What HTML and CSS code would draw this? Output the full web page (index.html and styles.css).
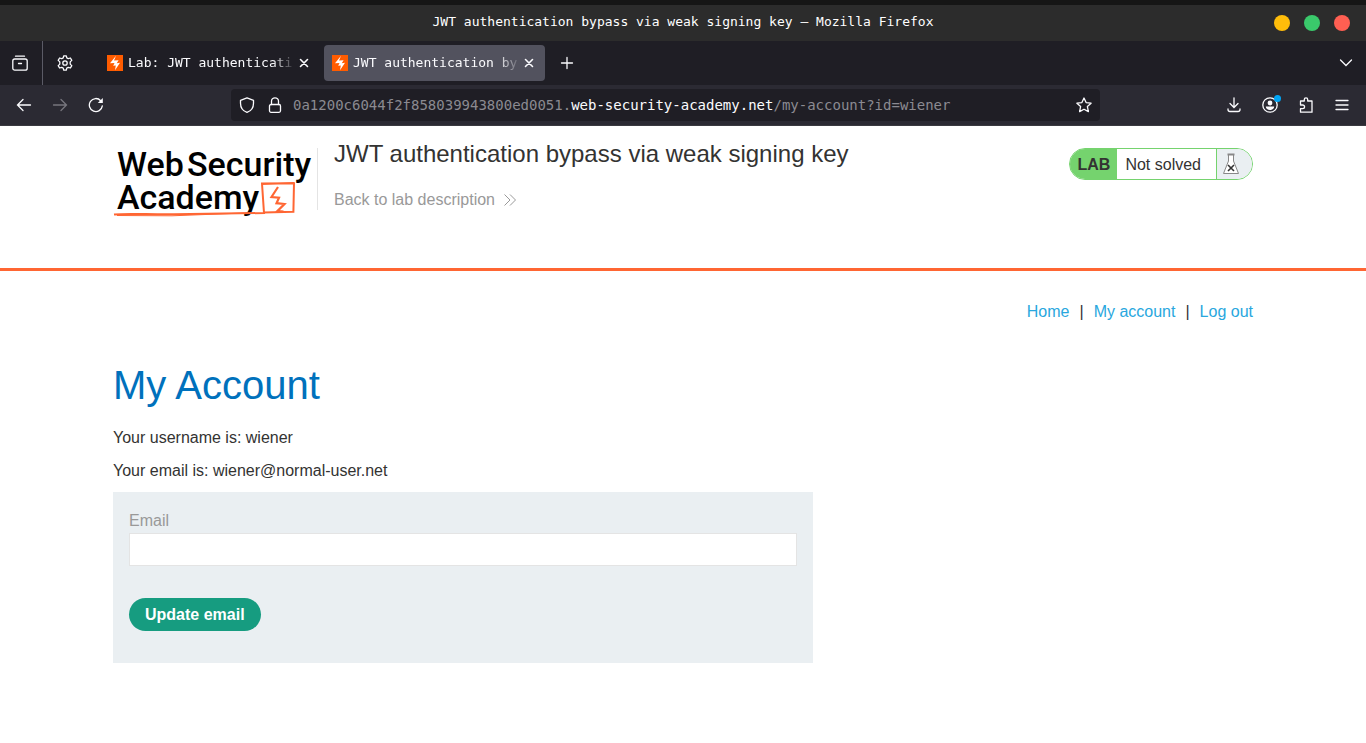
FILE: index.html
```html
<!DOCTYPE html>
<html lang="en">
<head>
<meta charset="utf-8">
<title>JWT authentication bypass via weak signing key</title>
<link rel="stylesheet" href="styles.css">
</head>
<body>
<svg class="defs" width="0" height="0" aria-hidden="true">
  <symbol id="bolt" viewBox="0 0 16 16"><path d="M0 0h16v16H0z" fill="#ff5c00"/><path d="M9 .8L7 5.600l4.600-.3L9.700 8.200l3.300-.4L8 15.200l.8-4.600-2.600.2 1.300-2.900-4.500.4z" fill="#fff"/></symbol>
  <symbol id="close" viewBox="0 0 16 16"><path d="M4.500 4.500l7 7M11.500 4.500l-7 7" fill="none" stroke="currentColor" stroke-width="1.600" stroke-linecap="round"/></symbol>
</svg>
<div class="desktop-bar"></div>
<div class="titlebar">
  <span class="window-title">JWT authentication bypass via weak signing key — Mozilla Firefox</span>
  <div class="window-buttons">
    <button class="dot yellow" aria-label="Minimize"></button>
    <button class="dot green" aria-label="Maximize"></button>
    <button class="dot red" aria-label="Close window"></button>
  </div>
</div>
<div class="tabs">
  <button class="tool view" aria-label="Recent browsing"><svg class="icon" viewBox="0 0 16 16"><path d="M3.500 1.200h9"/><rect x=".8" y="4" width="14.400" height="11.200" rx="2"/><path d="M6.500 8.500h3"/></svg></button>
  <button class="tool gear" aria-label="Settings"><svg class="icon" viewBox="0 0 16 16"><path d="M6.700.8h2.600l.5 2.100 1.500.8 2.100-.7 1.400 2.400-1.600 1.500v2.200l1.600 1.500-1.400 2.400-2.100-.7-1.500.8-.5 2.100H6.700l-.5-2.100-1.500-.8-2.100.7-1.400-2.400 1.600-1.500V6.900L1.200 5.400l1.400-2.400 2.100.7 1.500-.8z" stroke-linejoin="round"/><circle cx="8" cy="8" r="2.200"/></svg></button>
  <div class="tab">
    <svg class="icon"><use href="#bolt"/></svg><span class="tab-title">Lab: JWT authenticati</span>
    <button class="tab-close" aria-label="Close tab"><svg class="icon"><use href="#close"/></svg></button>
  </div>
  <div class="tab active">
    <svg class="icon"><use href="#bolt"/></svg><span class="tab-title">JWT authentication by</span>
    <button class="tab-close" aria-label="Close tab"><svg class="icon"><use href="#close"/></svg></button>
  </div>
  <button class="tool" aria-label="New tab"><svg class="icon" viewBox="0 0 16 16"><path d="M8 2.500v11M2.500 8h11"/></svg></button>
  <button class="tool last" aria-label="List all tabs"><svg class="icon" viewBox="0 0 16 16"><path d="M2.500 5l5.500 5.500L13.500 5"/></svg></button>
</div>
<div class="navbar">
  <div class="nav-buttons">
    <button class="bare" aria-label="Back"><svg class="icon" viewBox="0 0 16 16"><path d="M14.500 8H1.500M7 2.500L1.500 8 7 13.500"/></svg></button>
    <button class="bare dim" aria-label="Forward"><svg class="icon" viewBox="0 0 16 16"><path d="M1.500 8h13M9 2.500L14.500 8 9 13.500"/></svg></button>
    <button class="bare" aria-label="Reload"><svg class="icon" viewBox="0 0 16 16"><path d="M14.300 8.800A6.500 6.500 0 1 1 12.700 3.700"/><path d="M14.800 1v5H9.800z" fill="currentColor" stroke="none"/></svg></button>
  </div>
  <div class="urlbar">
    <svg class="icon" viewBox="0 0 16 16"><path d="M8 .8l6.500 2.500v3C14.500 10.500 12 14 8 15.400 4 14 1.500 10.500 1.500 6.300v-3z" stroke-linejoin="round"/></svg>
    <svg class="icon lock" viewBox="0 0 16 16"><rect x="2.500" y="7.500" width="11" height="7.800" rx="1.500"/><path d="M4.500 7.500V4.300a3.500 3.500 0 0 1 7 0v3.200"/></svg>
    <div class="url" role="textbox" aria-label="Address">0a1200c6044f2f858039943800ed0051.<span class="domain">web-security-academy.net</span>/my-account?id=wiener</div>
    <button class="bare" aria-label="Bookmark"><svg class="icon" viewBox="0 0 16 16"><path d="M8 1l2.100 4.600 5 .6-3.700 3.400 1 5L8 12.200l-4.400 2.400 1-5L.9 6.200l5-.6z" stroke-linejoin="round"/></svg></button>
  </div>
  <div class="nav-tools">
    <button class="bare" aria-label="Downloads"><svg class="icon" viewBox="0 0 16 16"><path d="M8 .8v9.700M4 6.500l4 4 4-4M2 12v.5a2 2 0 0 0 2 2h8a2 2 0 0 0 2-2V12"/></svg></button>
    <button class="bare account" aria-label="Account"><svg class="icon" viewBox="0 0 16 16"><circle cx="8" cy="8" r="7.200"/><circle cx="8" cy="6" r="2.400" fill="currentColor" stroke="none"/><path d="M3.800 9.500h8.400c0 2-1.900 3.600-4.200 3.600s-4.200-1.600-4.200-3.600z" fill="currentColor" stroke="none"/></svg></button>
    <button class="bare" aria-label="Extensions"><svg class="icon" viewBox="0 0 16 16"><path d="M2.500 7V4h3.800V2.500a1.700 1.700 0 0 1 3.400 0V4H14v11.200H2.500v-3.500h2.200a1.800 1.800 0 0 0 0-3.700H2.500z" stroke-linejoin="round"/></svg></button>
    <button class="bare" aria-label="Menu"><svg class="icon" viewBox="0 0 16 16"><path d="M2 3.500h12M2 8h12M2 12.500h12"/></svg></button>
  </div>
</div>

<header class="lab-header">
  <div class="container header-row">
    <a class="logo" href="#" aria-label="Web Security Academy">
      <svg width="204" height="78" viewBox="0 0 204 78">
        <g class="logo-text"><text x="4" y="36">Web</text><text x="74" y="36">Security</text><text x="4" y="69">Academy</text></g>
        <path d="M1 74.500c14-1.500 36 .2 60-.2l90-1.300-2-29.500 32-.3-.6 28.500-30 .8" fill="none" stroke="#ff6633" stroke-width="2"/>
        <path d="M4 75.500l55 .3 72-2.800M149 44.500l32-2" fill="none" stroke="#ff6633"/>
        <path d="M165 47l-6.500 10 7.500.6-2.500 5.600 8 .8-7 7 6 .6" fill="none" stroke="#ff6633" stroke-width="2.200"/>
      </svg>
    </a>
    <div class="lab-title">
      <h2>JWT authentication bypass via weak signing key</h2>
      <a class="back" href="#">Back to lab description <svg width="12" height="12" viewBox="0 0 12 12"><path d="M.5.5L6 6 .5 11.500M6 .5L11.500 6 6 11.500" fill="none" stroke="#999"/></svg></a>
    </div>
    <div class="status">
      <span class="tag">LAB</span><span class="state">Not solved</span>
      <span class="flask"><svg width="18" height="22" viewBox="0 0 18 22"><path d="M6.500 2v6L1.500 20.500h15L11.500 8V2" fill="#fff" stroke="#888"/><path d="M5.500 1.500h7" stroke="#888" stroke-width="2"/><path d="M6 12l6 6M12 12l-6 6" stroke="#333" stroke-width="1.600"/></svg></span>
    </div>
  </div>
</header>
<main class="container">
  <nav class="links"><a href="#">Home</a><span>|</span><a href="#">My account</a><span>|</span><a href="#">Log out</a></nav>
  <h1>My Account</h1>
  <div class="details">
    <p>Your username is: wiener</p>
    <p>Your email is: wiener@normal-user.net</p>
  </div>
  <form class="email-form">
    <label for="email">Email</label>
    <input id="email" type="email">
    <button type="button">Update email</button>
  </form>
</main>
</body>
</html>
```
FILE: styles.css
```css
* { box-sizing: border-box; }
body { margin: 0; background: #fff; color: #333332; font: 16px/20px "Liberation Sans", Arial, sans-serif; }
a { text-decoration: none; color: #29a7de; }
button { font: inherit; color: inherit; border: 0; padding: 0; background: none; }
.defs { position: absolute; }
.icon { display: block; flex: none; width: 16px; height: 16px; fill: none; stroke: currentColor; stroke-width: 1.3; stroke-linecap: round; }

.desktop-bar { height: 5px; background: #161616; }
.titlebar { position: relative; display: flex; align-items: center; justify-content: center; height: 36px; background: #2c2c2c; color: #fff; font: 13px/20px "DejaVu Sans Mono", monospace; padding-bottom: 2px; }
.window-buttons { position: absolute; right: 16px; top: 10px; display: flex; gap: 14px; }
.dot { width: 16px; height: 16px; border-radius: 50%; }
.yellow { background: #ffbd0a; }
.green { background: #3ac96b; }
.red { background: #ff5f52; }

.tabs { display: flex; align-items: center; height: 44px; background: #1f1e25; color: #fbfbfe; font: 13px/20px "DejaVu Sans Mono", monospace; }
.tool { display: flex; align-items: center; justify-content: center; width: 44px; height: 44px; }
.view { width: 43px; padding-right: 3px; border-right: 1px solid #5b5b66; }
.gear { margin-right: 12px; }
.last { margin-left: auto; width: 40px; }
.tab { display: flex; align-items: center; width: 221px; height: 36px; padding: 0 8px; border-radius: 4px; }
.tab + .tab { margin-left: 4px; }
.active { background: #52525e; }
.tab .icon { stroke: none; }
.tab-title { flex: 1; min-width: 0; margin-left: 5px; white-space: nowrap; -webkit-mask-image: linear-gradient(to left, transparent, #000 24px); mask-image: linear-gradient(to left, transparent, #000 24px); }

.navbar { display: flex; align-items: center; justify-content: space-between; height: 41px; padding: 0 16px; background: #2b2a33; border-bottom: 1px solid #3a3a40; color: #fbfbfe; }
.nav-buttons { display: flex; gap: 20px; width: 215px; }
.dim { color: #77767e; }
.urlbar { display: flex; align-items: center; flex: 1; height: 32px; padding: 0 8px; border-radius: 4px; background: #1f1e25; }
.lock { margin-left: 12px; }
.url { flex: 1; margin-left: 10px; color: #8b8a91; font: 14px/20px "DejaVu Sans Mono", monospace; white-space: nowrap; overflow: hidden; }
.domain { color: #fbfbfe; }
.nav-tools { display: flex; justify-content: flex-end; gap: 20px; width: 250px; }
.account { position: relative; }
.account::after { content: ""; position: absolute; top: -2px; right: -3px; width: 7px; height: 7px; border-radius: 50%; background: #00a5f5; }

.container { max-width: 1140px; margin: 0 auto; }
.lab-header { border-bottom: 3px solid #ff6633; padding: 14px 0 50px; }
.header-row { display: flex; align-items: flex-start; }
.logo svg { display: block; overflow: visible; }
.logo-text { font: 500 34px Roboto, sans-serif; fill: #000; }
.lab-title { flex: 1; height: 62px; margin-top: 8px; padding-left: 16px; border-left: 1px solid #e4e4e4; }
.lab-title h2 { margin: -10px 0 21px; font-size: 24px; line-height: 31px; font-weight: 400; }
.back { display: flex; align-items: center; gap: 9px; color: #999; }
.status { display: flex; height: 32px; margin-top: 8px; border: 1px solid #75d36e; border-radius: 16px; overflow: hidden; line-height: 32px; }
.tag { padding: 0 7px 0 8px; background: #75d36e; font-weight: 700; }
.state { padding: 0 15px 0 8px; }
.flask { display: flex; align-items: center; width: 36px; padding-left: 5px; background: #eaeff2; border-left: 1px solid #75d36e; }

.links { display: flex; justify-content: flex-end; gap: 10px; padding-top: 31px; color: #333; }
h1 { margin: 38px 0 17px; color: #0071bc; font-size: 40px; line-height: 50px; font-weight: 400; }
.details { display: grid; gap: 12px; padding-bottom: 11px; line-height: 21px; }
.details p { margin: 0; }
.email-form { display: flex; flex-direction: column; align-items: flex-start; max-width: 700px; padding: 18px 16px 32px; background: #eaeff2; }
.email-form label { color: #999; line-height: 21px; margin-bottom: 2px; }
.email-form input { width: 100%; height: 33px; margin-bottom: 32px; padding: 4px 8px; border: 1px solid #e4e4e4; background: #fff; font: inherit; }
.email-form button { height: 33px; padding: 0 16px; border-radius: 17px; background: #169c80; color: #fff; font-weight: 700; }
```
